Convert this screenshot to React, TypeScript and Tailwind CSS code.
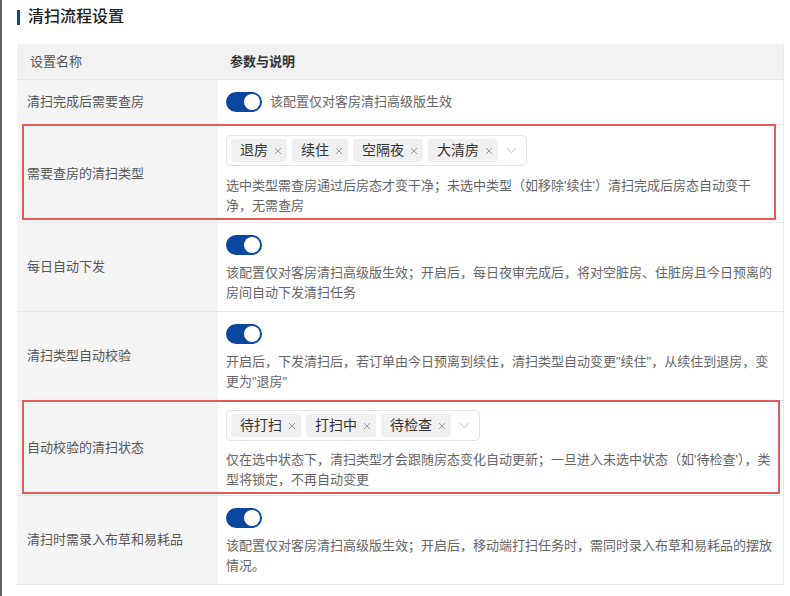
import React from 'react';

interface SettingRow {
  name: string;
  kind: 'switch' | 'tags';
  inline?: string;
  lines?: string[];
  tags?: string[];
  marked?: boolean;
}

const rows: SettingRow[] = [
  { name: '清扫完成后需要查房', kind: 'switch', inline: '该配置仅对客房清扫高级版生效' },
  {
    name: '需要查房的清扫类型',
    kind: 'tags',
    tags: ['退房', '续住', '空隔夜', '大清房'],
    lines: ["选中类型需查房通过后房态才变干净；未选中类型（如移除'续住'）清扫完成后房态自动变干", '净，无需查房'],
    marked: true
  },
  {
    name: '每日自动下发',
    kind: 'switch',
    lines: ['该配置仅对客房清扫高级版生效；开启后，每日夜审完成后，将对空脏房、住脏房且今日预离的', '房间自动下发清扫任务']
  },
  {
    name: '清扫类型自动校验',
    kind: 'switch',
    lines: ['开启后，下发清扫后，若订单由今日预离到续住，清扫类型自动变更"续住"，从续住到退房，变', '更为"退房"']
  },
  {
    name: '自动校验的清扫状态',
    kind: 'tags',
    tags: ['待打扫', '打扫中', '待检查'],
    lines: ["仅在选中状态下，清扫类型才会跟随房态变化自动更新；一旦进入未选中状态（如'待检查'），类", '型将锁定，不再自动变更'],
    marked: true
  },
  {
    name: '清扫时需录入布草和易耗品',
    kind: 'switch',
    lines: ['该配置仅对客房清扫高级版生效；开启后，移动端打扫任务时，需同时录入布草和易耗品的摆放', '情况。']
  }
];

function Toggle() {
  return (
    <div className="w-[36px] h-[20px] rounded-full bg-[#0b47a1] flex items-center justify-end p-[2px] shrink-0">
      <div className="w-[16px] h-[16px] rounded-full bg-white" />
    </div>
  );
}

function Tag({ label }: { label: string }) {
  return (
    <span className="h-[23px] flex items-center gap-[5px] pl-[9px] pr-[4px] rounded-[3px] bg-[#f0f0f0] text-[14px] leading-[23px] text-[#333]">
      {label}
      <svg width="10" height="10" viewBox="0 0 10 10" className="text-[#9a9a9a]">
        <path d="M2 2 8 8M8 2 2 8" stroke="currentColor" strokeWidth="1" fill="none" />
      </svg>
    </span>
  );
}

function Description({ lines }: { lines: string[] }) {
  return (
    <p className="text-[13px] leading-[20px] text-[#666] whitespace-nowrap">
      {lines[0]}
      <br />
      {lines[1]}
    </p>
  );
}

export default function App() {
  return (
    <div className="min-h-screen flex bg-white font-['Liberation_Sans','Noto_Sans_CJK_SC',sans-serif]">
      <div className="w-[2px] bg-[#5e5e5e] shrink-0" />
      <div className="flex-1 pl-[15px] pr-[6px]">
        <div className="h-[34px] mb-[10px] flex items-center gap-[8px]">
          <span className="w-[3px] h-[15px] bg-[#0b47a1]" />
          <h2 className="text-[16px] font-medium text-[#222]">清扫流程设置</h2>
        </div>

        <div className="border-r border-[#ebebeb]">
          <div className="grid grid-cols-[201px_1fr] h-[36px] bg-[#f2f2f2] border-b border-[#e6e6e6] text-[13px]">
            <div className="pl-[13px] flex items-center text-[#555]">设置名称</div>
            <div className="pl-[12px] flex items-center font-semibold text-[#333]">参数与说明</div>
          </div>

          {rows.map((row, i) => (
            <div key={i} className="relative grid grid-cols-[201px_1fr] border-b border-[#e8e8e8]">
              <div className="bg-[#f5f5f5] pl-[10px] flex items-center text-[13px] text-[#555]">{row.name}</div>
              {row.kind === 'switch' && row.inline && (
                <div className="h-[44px] pl-2 flex items-center gap-[8px] text-[13px] text-[#666]">
                  <Toggle />
                  {row.inline}
                </div>
              )}
              {row.kind === 'switch' && row.lines && (
                <div className="pl-2 pt-3 pb-2">
                  <Toggle />
                  <div className="mt-2">
                    <Description lines={row.lines} />
                  </div>
                </div>
              )}
              {row.kind === 'tags' && row.tags && row.lines && (
                <div className={i === 1 ? 'pl-2 pt-[10px] pb-[6px]' : 'pl-2 pt-[9px] pb-[5px]'}>
                  <div className="inline-flex items-center h-[31px] border border-[#e3e3e3] rounded-[5px] pl-[4px] pr-[9px] gap-[5px]">
                    {row.tags.map(t => (
                      <Tag key={t} label={t} />
                    ))}
                    <svg width="11" height="7" viewBox="0 0 11 7" className="ml-[3px] text-[#c2c2c2]">
                      <path d="M1 1 5.5 5.5 10 1" stroke="currentColor" strokeWidth="1" fill="none" />
                    </svg>
                  </div>
                  <div className={i === 1 ? 'mt-[10px]' : 'mt-[9px]'}>
                    <Description lines={row.lines} />
                  </div>
                </div>
              )}
              {row.marked && (
                <div
                  className={
                    i === 1
                      ? 'absolute left-[5px] right-[7px] top-[-1px] bottom-[2px] border-2 border-[#e35b5b] pointer-events-none'
                      : 'absolute left-[5px] right-[3px] top-[-1px] bottom-[1px] border-2 border-[#e35b5b] pointer-events-none'
                  }
                />
              )}
            </div>
          ))}
        </div>
      </div>
    </div>
  );
}
